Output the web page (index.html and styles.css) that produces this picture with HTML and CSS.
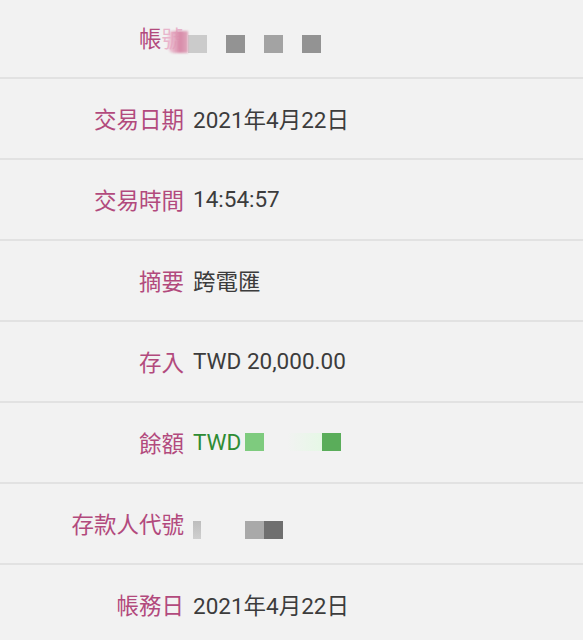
FILE: index.html
```html
<!DOCTYPE html>
<html lang="zh-Hant">
<head>
<meta charset="utf-8">
<link rel="stylesheet" href="styles.css">
</head>
<body>
<div class="list">
  <div class="row">
    <div class="label">帳<span class="ghost">號</span></div>
    <div class="value blocks">
      <span class="blk pinkblur"></span><span class="blk g1"></span><span class="blk g2 sp"></span><span class="blk g3 sp"></span><span class="blk g2 sp"></span>
    </div>
  </div>
  <div class="row">
    <div class="label">交易日期</div>
    <div class="value">2021年4月22日</div>
  </div>
  <div class="row">
    <div class="label">交易時間</div>
    <div class="value">14:54:57</div>
  </div>
  <div class="row">
    <div class="label">摘要</div>
    <div class="value">跨電匯</div>
  </div>
  <div class="row">
    <div class="label">存入</div>
    <div class="value">TWD 20,000.00</div>
  </div>
  <div class="row">
    <div class="label">餘額</div>
    <div class="value green">TWD<span class="blk gr1"></span><span class="fade"></span><span class="blk gr2"></span></div>
  </div>
  <div class="row">
    <div class="label">存款人代號</div>
    <div class="value blocks"><span class="blurchar"></span><span class="blk d1"></span><span class="blk d2"></span></div>
  </div>
  <div class="row">
    <div class="label">帳務日</div>
    <div class="value">2021年4月22日</div>
  </div>
</div>
</body>
</html>
```

FILE: styles.css
```css
html, body {
  margin: 0;
  padding: 0;
  background: #f2f2f2;
}
body {
  font-family: Roboto, "Noto Sans CJK TC", sans-serif;
  overflow: hidden;
}
.list {
  margin-top: -2px;
}
.row {
  height: 81px;
  box-sizing: border-box;
  border-bottom: 2px solid #e2e2e2;
  display: grid;
  grid-template-columns: 184px 1fr;
  column-gap: 9px;
  align-items: center;
  padding-bottom: 1px;
}
.label {
  text-align: right;
  color: #b24a7d;
  font-size: 22.5px;
  font-family: "Noto Sans CJK TC", sans-serif;
  white-space: nowrap;
}
.ghost {
  color: #e8b5cb;
}
.value {
  color: #3c3c3c;
  font-size: 22.5px;
  font-family: Roboto, "Noto Sans CJK TC", sans-serif;
  display: flex;
  align-items: center;
  white-space: nowrap;
}
.blocks {
  padding-top: 14px;
}
.blk {
  display: inline-block;
  width: 19px;
  height: 18px;
}
.pinkblur {
  width: 20px;
  height: 22px;
  margin-left: -25px;
  margin-top: -4px;
  background: linear-gradient(90deg, rgba(240,190,210,0.6), #d88aa8 60%, #e0a8bd);
  border-radius: 4px 0 0 6px;
  filter: blur(1px);
}
.g1 { background: #cbcbcb; }
.g2 { background: #939393; }
.g3 { background: #a3a3a3; }
.sp { margin-left: 19px; }
.green { color: #2f8c34; }
.gr1 {
  background: #7ecb7e;
  margin-left: 4px;
}
.fade {
  display: inline-block;
  width: 35px;
  height: 18px;
  margin-left: 23px;
  background: linear-gradient(90deg, rgba(232,248,232,0), #e6f8e6);
}
.gr2 {
  background: #5aad5a;
}
.blurchar {
  display: inline-block;
  width: 8px;
  height: 18px;
  background: linear-gradient(180deg, #bdbdbd, #cfcfcf);
  filter: blur(0.6px);
}
.d1 {
  margin-left: 44px;
  background: #a9a9a9;
}
.d2 {
  background: #6f6f6f;
}
```
